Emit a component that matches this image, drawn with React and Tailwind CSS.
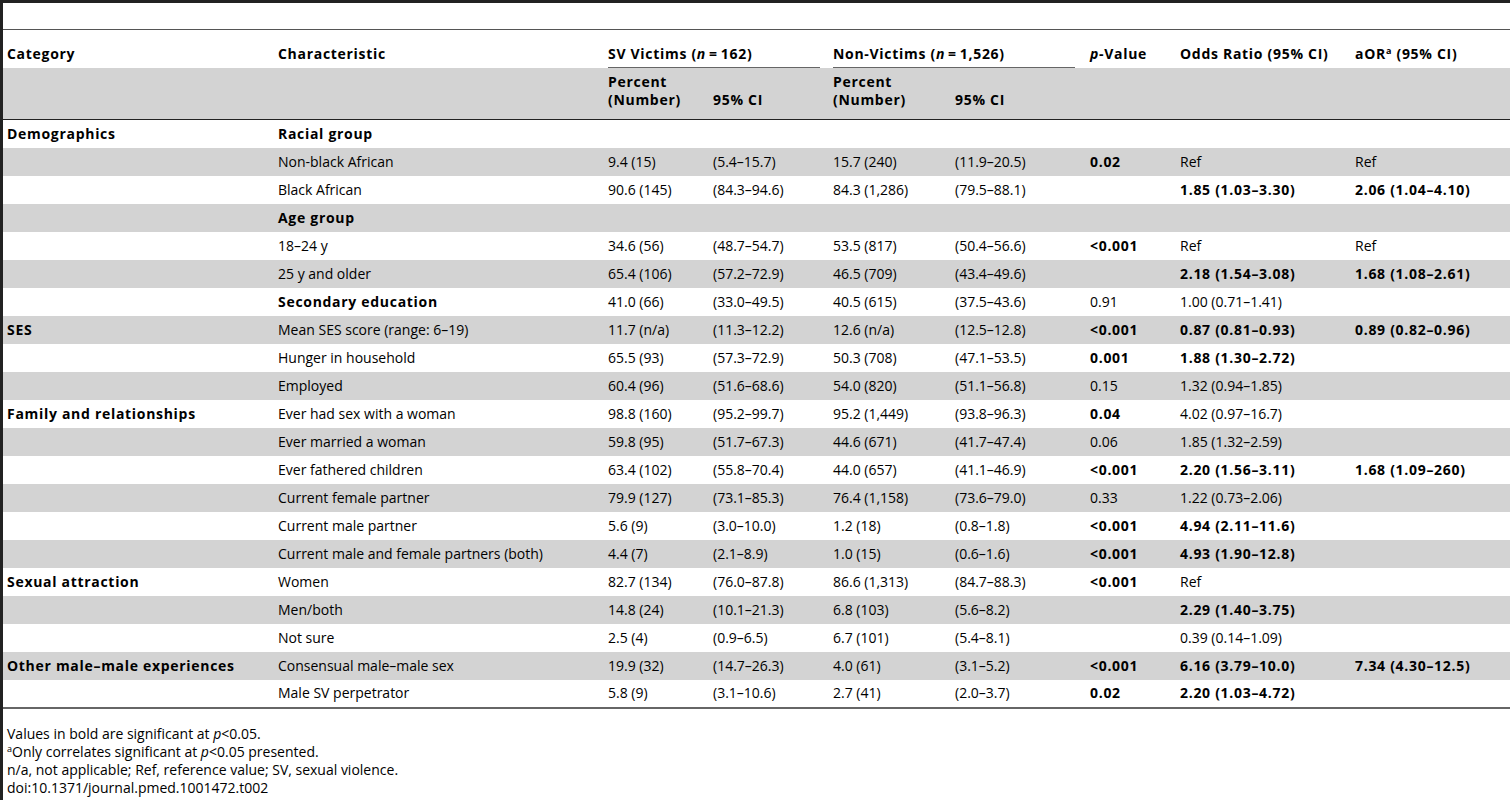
import React from 'react'

const rows = [
  { cat: 'Demographics', ch: 'Racial group', chBold: true },
  { ch: 'Non-black African', v: ['9.4 (15)', '(5.4–15.7)', '15.7 (240)', '(11.9–20.5)'], p: '0.02', pb: true, or: 'Ref', aor: 'Ref' },
  { ch: 'Black African', v: ['90.6 (145)', '(84.3–94.6)', '84.3 (1,286)', '(79.5–88.1)'], or: '1.85 (1.03–3.30)', orb: true, aor: '2.06 (1.04–4.10)', aorb: true },
  { ch: 'Age group', chBold: true },
  { ch: '18–24 y', v: ['34.6 (56)', '(48.7–54.7)', '53.5 (817)', '(50.4–56.6)'], p: '<0.001', pb: true, or: 'Ref', aor: 'Ref' },
  { ch: '25 y and older', v: ['65.4 (106)', '(57.2–72.9)', '46.5 (709)', '(43.4–49.6)'], or: '2.18 (1.54–3.08)', orb: true, aor: '1.68 (1.08–2.61)', aorb: true },
  { ch: 'Secondary education', chBold: true, v: ['41.0 (66)', '(33.0–49.5)', '40.5 (615)', '(37.5–43.6)'], p: '0.91', or: '1.00 (0.71–1.41)' },
  { cat: 'SES', ch: 'Mean SES score (range: 6–19)', v: ['11.7 (n/a)', '(11.3–12.2)', '12.6 (n/a)', '(12.5–12.8)'], p: '<0.001', pb: true, or: '0.87 (0.81–0.93)', orb: true, aor: '0.89 (0.82–0.96)', aorb: true },
  { ch: 'Hunger in household', v: ['65.5 (93)', '(57.3–72.9)', '50.3 (708)', '(47.1–53.5)'], p: '0.001', pb: true, or: '1.88 (1.30–2.72)', orb: true },
  { ch: 'Employed', v: ['60.4 (96)', '(51.6–68.6)', '54.0 (820)', '(51.1–56.8)'], p: '0.15', or: '1.32 (0.94–1.85)' },
  { cat: 'Family and relationships', ch: 'Ever had sex with a woman', v: ['98.8 (160)', '(95.2–99.7)', '95.2 (1,449)', '(93.8–96.3)'], p: '0.04', pb: true, or: '4.02 (0.97–16.7)' },
  { ch: 'Ever married a woman', v: ['59.8 (95)', '(51.7–67.3)', '44.6 (671)', '(41.7–47.4)'], p: '0.06', or: '1.85 (1.32–2.59)' },
  { ch: 'Ever fathered children', v: ['63.4 (102)', '(55.8–70.4)', '44.0 (657)', '(41.1–46.9)'], p: '<0.001', pb: true, or: '2.20 (1.56–3.11)', orb: true, aor: '1.68 (1.09–260)', aorb: true },
  { ch: 'Current female partner', v: ['79.9 (127)', '(73.1–85.3)', '76.4 (1,158)', '(73.6–79.0)'], p: '0.33', or: '1.22 (0.73–2.06)' },
  { ch: 'Current male partner', v: ['5.6 (9)', '(3.0–10.0)', '1.2 (18)', '(0.8–1.8)'], p: '<0.001', pb: true, or: '4.94 (2.11–11.6)', orb: true },
  { ch: 'Current male and female partners (both)', v: ['4.4 (7)', '(2.1–8.9)', '1.0 (15)', '(0.6–1.6)'], p: '<0.001', pb: true, or: '4.93 (1.90–12.8)', orb: true },
  { cat: 'Sexual attraction', ch: 'Women', v: ['82.7 (134)', '(76.0–87.8)', '86.6 (1,313)', '(84.7–88.3)'], p: '<0.001', pb: true, or: 'Ref' },
  { ch: 'Men/both', v: ['14.8 (24)', '(10.1–21.3)', '6.8 (103)', '(5.6–8.2)'], or: '2.29 (1.40–3.75)', orb: true },
  { ch: 'Not sure', v: ['2.5 (4)', '(0.9–6.5)', '6.7 (101)', '(5.4–8.1)'], or: '0.39 (0.14–1.09)' },
  { cat: 'Other male–male experiences', ch: 'Consensual male–male sex', v: ['19.9 (32)', '(14.7–26.3)', '4.0 (61)', '(3.1–5.2)'], p: '<0.001', pb: true, or: '6.16 (3.79–10.0)', orb: true, aor: '7.34 (4.30–12.5)', aorb: true },
  { ch: 'Male SV perpetrator', v: ['5.8 (9)', '(3.1–10.6)', '2.7 (41)', '(2.0–3.7)'], p: '0.02', pb: true, or: '2.20 (1.03–4.72)', orb: true },
]

function Cell({ children, bold, first }) {
  return (
    <td
      className={
        'h-[28px] py-0 align-middle whitespace-nowrap ' +
        (first ? 'pl-[4px] pr-[7px] ' : 'px-[7px] ') +
        (bold ? 'font-bold tracking-[0.7px]' : '')
      }
    >
      {children}
    </td>
  )
}

export default function App() {
  return (
    <div
      className="min-h-[800px] border-l-[3px] border-t-[3px] border-[#222] bg-white text-[14px] leading-[18px] text-black"
      style={{ fontFamily: '"Open Sans", "Noto Sans", sans-serif' }}
    >
      <div className="h-[26px]" />
      <table className="w-full table-fixed border-collapse border-t border-[#555]">
        <colgroup>
          <col className="w-[268px]" />
          <col className="w-[330px]" />
          <col className="w-[105px]" />
          <col className="w-[120px]" />
          <col className="w-[122px]" />
          <col className="w-[135px]" />
          <col className="w-[90px]" />
          <col className="w-[175px]" />
          <col className="w-[162px]" />
        </colgroup>
        <thead className="tracking-[0.7px]">
          <tr className="h-[38px] text-left">
            <th className="pl-[4px] pr-[7px] pb-[5px] align-bottom font-bold">Category</th>
            <th className="px-[7px] pb-[5px] align-bottom font-bold">Characteristic</th>
            <th colSpan={2} className="pl-[7px] pr-[6px] pb-0 align-bottom font-bold">
              <div className="border-b border-[#666] pb-[4px]">
                SV Victims (<i className="font-bold">n</i>{'\u2009=\u2009'}162)
              </div>
            </th>
            <th colSpan={2} className="pl-[7px] pr-[8px] pb-0 align-bottom font-bold">
              <div className="border-b border-[#666] pb-[4px]">
                Non-Victims (<i className="font-bold">n</i>{'\u2009=\u2009'}1,526)
              </div>
            </th>
            <th className="px-[7px] pb-[5px] align-bottom font-bold">
              <i>p</i>-Value
            </th>
            <th className="px-[7px] pb-[5px] align-bottom font-bold whitespace-nowrap">Odds Ratio (95% CI)</th>
            <th className="px-[7px] pb-[5px] align-bottom font-bold whitespace-nowrap">
              aOR<sup className="text-[9px]">a</sup> (95% CI)
            </th>
          </tr>
          <tr className="h-[52px] bg-[#d3d3d3] text-left border-b border-[#222]">
            <th />
            <th />
            <th className="px-[7px] pb-[10px] align-bottom font-bold">
              Percent
              <br />
              (Number)
            </th>
            <th className="px-[7px] pb-[10px] align-bottom font-bold">95% CI</th>
            <th className="px-[7px] pb-[10px] align-bottom font-bold">
              Percent
              <br />
              (Number)
            </th>
            <th className="px-[7px] pb-[10px] align-bottom font-bold">95% CI</th>
            <th />
            <th />
            <th />
          </tr>
        </thead>
        <tbody className="border-b-2 border-[#666]">
          {rows.map((r, i) => (
            <tr key={i} className={i % 2 === 1 ? 'bg-[#d3d3d3]' : 'bg-white'}>
              <Cell bold first>{r.cat || ''}</Cell>
              <Cell bold={r.chBold}>{r.ch}</Cell>
              {(r.v || ['', '', '', '']).map((x, j) => (
                <Cell key={j}>{x}</Cell>
              ))}
              <Cell bold={r.pb}>{r.p || ''}</Cell>
              <Cell bold={r.orb}>{r.or || ''}</Cell>
              <Cell bold={r.aorb}>{r.aor || ''}</Cell>
            </tr>
          ))}
        </tbody>
      </table>
      <div className="mt-[16px] px-[4px]">
        <p>
          Values in bold are significant at <i>p</i>&lt;0.05.
        </p>
        <p>
          <sup className="text-[9px]">a</sup>Only correlates significant at <i>p</i>&lt;0.05 presented.
        </p>
        <p>n/a, not applicable; Ref, reference value; SV, sexual violence.</p>
        <p>doi:10.1371/journal.pmed.1001472.t002</p>
      </div>
    </div>
  )
}
